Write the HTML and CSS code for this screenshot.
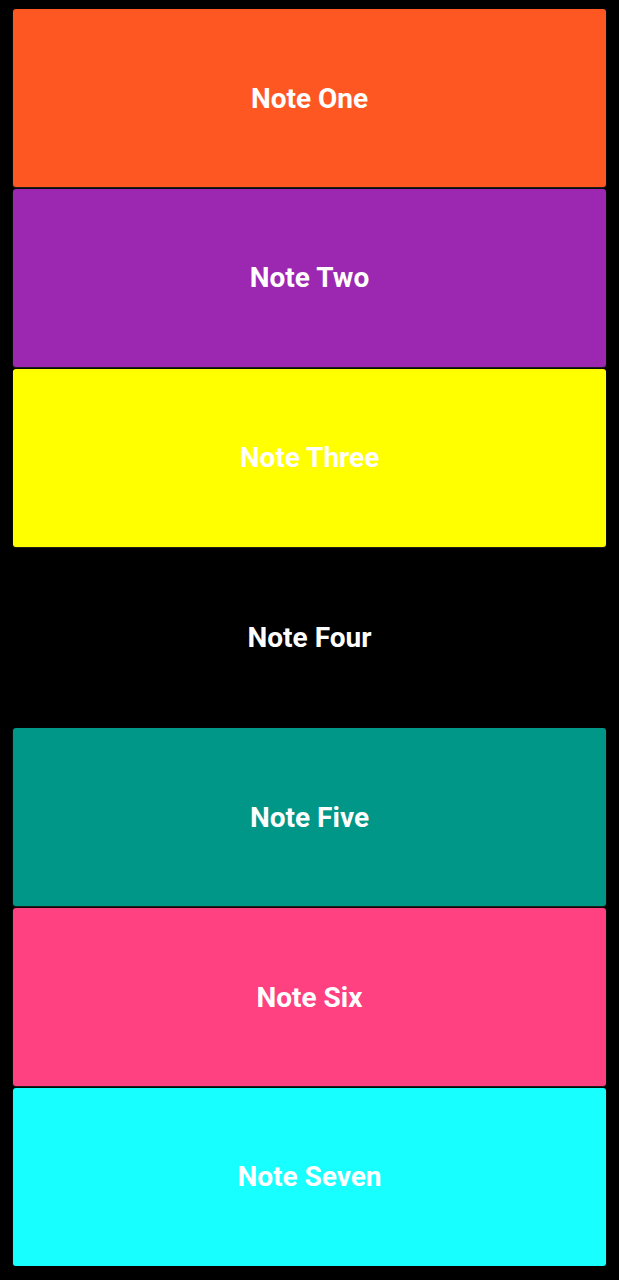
FILE: index.html
```
<!DOCTYPE html>
<html>
<head>
<meta charset="utf-8">
<link rel="stylesheet" href="styles.css">
</head>
<body>
<div class="list">
  <div class="card orange"><span class="title">Note One</span></div>
  <div class="card purple"><span class="title">Note Two</span></div>
  <div class="card yellow"><span class="title">Note Three</span></div>
  <div class="card black"><span class="title">Note Four</span></div>
  <div class="card teal"><span class="title">Note Five</span></div>
  <div class="card pink"><span class="title">Note Six</span></div>
  <div class="card cyan"><span class="title">Note Seven</span></div>
</div>
</body>
</html>
```
FILE: styles.css
```
html, body {
  margin: 0;
  padding: 0;
  background: #000;
}
.list {
  display: flex;
  flex-direction: column;
  gap: 1.83px;
  padding: 9px 13px 0 13px;
}
.card {
  height: 178px;
  border-radius: 3px;
  display: flex;
  align-items: center;
  justify-content: center;
  box-shadow: 0 1px 2px rgba(80, 80, 80, 0.5);
}
.title {
  font-family: Roboto, "Liberation Sans", sans-serif;
  font-weight: 700;
  font-size: 28px;
  color: #fff;
}
.orange { background: #ff5722; }
.purple { background: #9c27b0; }
.yellow { background: #ffff00; }
.black { background: #000; box-shadow: none; }
.teal { background: #009688; }
.pink { background: #ff4081; }
.cyan { background: #18ffff; }
```
